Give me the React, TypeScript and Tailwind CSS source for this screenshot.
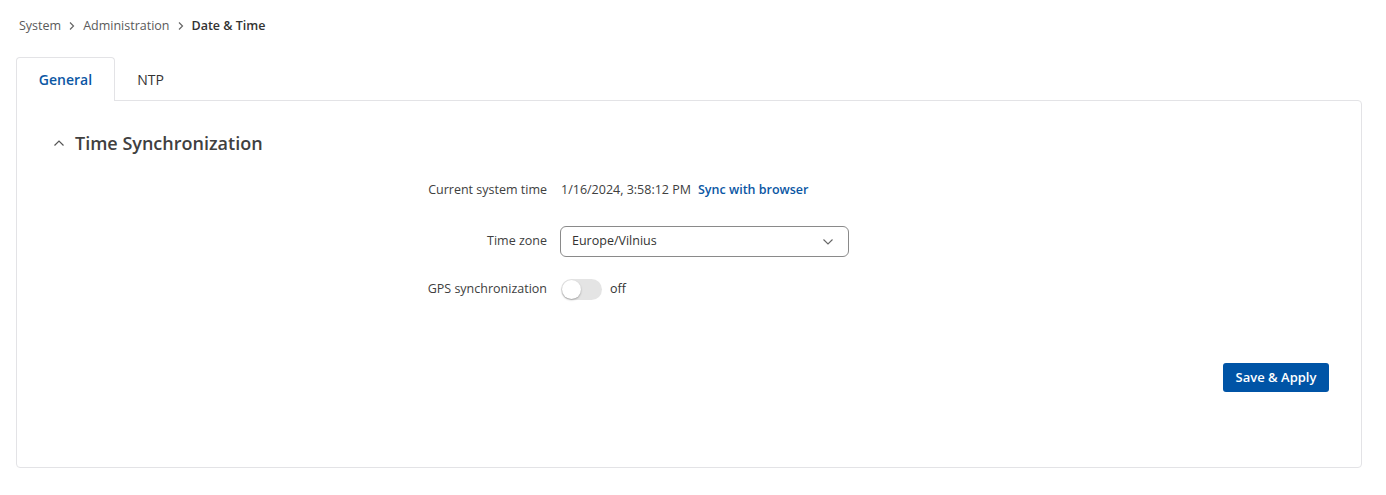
import React from "react";

export default function App() {
  return (
    <div className="w-[1386px] h-[495px] bg-white text-[12.5px] text-[#404040]" style={{ fontFamily: '"Open Sans", "Noto Sans", sans-serif' }}>
      <div className="pt-[16px] pl-[19px] flex items-center h-[20px] box-content text-[12.5px]">
        <span className="text-[#5a5a5a]">System</span>
        <svg className="mx-[6px]" width="10" height="10" viewBox="0 0 10 10"><path d="M3 1.5 L6.5 5 L3 8.5" fill="none" stroke="#666" strokeWidth="1.2" /></svg>
        <span className="text-[#5a5a5a]">Administration</span>
        <svg className="mx-[6px]" width="10" height="10" viewBox="0 0 10 10"><path d="M3 1.5 L6.5 5 L3 8.5" fill="none" stroke="#666" strokeWidth="1.2" /></svg>
        <span className="font-semibold text-[#333]">Date &amp; Time</span>
      </div>
      <div className="ml-[16px] mt-[21px] w-[1346px]">
        <div className="flex h-[44px]">
          <div className="w-[99px] h-[44px] border border-b-0 border-[#e3e3e6] rounded-t-[4px] bg-white flex items-center justify-center text-[14px] font-semibold text-[#0b57a4] relative z-10">
            General
          </div>
          <div className="flex-1 flex">
            <div className="w-[71px] flex items-center justify-center text-[14px] text-[#333]">NTP</div>
            <div className="flex-1" />
          </div>
        </div>
        <div className="border border-[#e3e3e6] rounded-b-[4px] rounded-tr-[4px] h-[368px] -mt-px">
          <div className="flex items-center pl-[36px] pt-[14px] h-[56px] box-content">
            <svg width="12" height="8" viewBox="0 0 12 8"><path d="M1.5 6.5 L6 2 L10.5 6.5" fill="none" stroke="#555" strokeWidth="1.2" /></svg>
            <span className="ml-[10px] text-[18px] font-semibold text-[#404040]">Time Synchronization</span>
          </div>
          <div className="flex items-center h-[20px] mt-[9px]">
            <div className="w-[530px] text-right text-[#404040]">Current system time</div>
            <div className="ml-[14px] flex items-center">
              <span className="text-[#404040]">1/16/2024, 3:58:12 PM</span>
              <span className="ml-[7px] font-semibold text-[#0b57a4]">Sync with browser</span>
            </div>
          </div>
          <div className="flex items-center mt-[26px] h-[31px]">
            <div className="w-[530px] text-right">Time zone</div>
            <div className="ml-[13px] w-[289px] h-[31px] border border-[#8a8a8a] rounded-[6px] flex items-center justify-between pl-[11px] pr-[14px]">
              <span className="text-[#333]">Europe/Vilnius</span>
              <svg width="12" height="8" viewBox="0 0 12 8"><path d="M1.5 1.5 L6 6 L10.5 1.5" fill="none" stroke="#666" strokeWidth="1.1" /></svg>
            </div>
          </div>
          <div className="flex items-center mt-[21px] h-[22px]">
            <div className="w-[530px] text-right">GPS synchronization</div>
            <div className="ml-[14px] flex items-center">
              <div className="w-[41px] h-[21px] rounded-full bg-[#e4e4e4] relative">
                <div className="absolute left-[1px] top-[1px] w-[19px] h-[19px] rounded-full bg-white shadow-[0_1px_2px_rgba(0,0,0,0.3)]" />
              </div>
              <span className="ml-[8px] text-[#333]">off</span>
            </div>
          </div>
          <div className="flex justify-end pr-[32px] mt-[63px]">
            <button className="w-[106px] h-[29px] rounded-[3px] bg-[#0054a6] text-white font-semibold text-[13px]">Save &amp; Apply</button>
          </div>
        </div>
      </div>
    </div>
  );
}
